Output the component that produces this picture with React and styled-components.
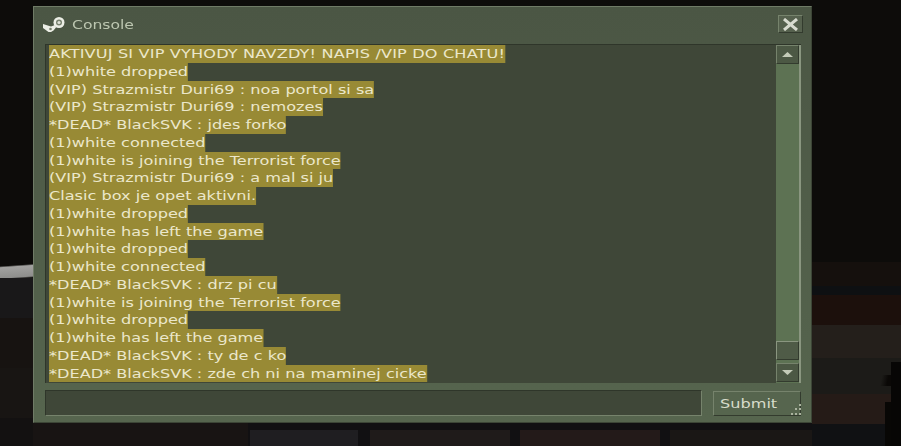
import React from "react";
import styled, { createGlobalStyle } from "styled-components";

const lines = [
  "AKTIVUJ SI VIP VYHODY NAVZDY! NAPIS /VIP DO CHATU!",
  "(1)white dropped",
  "(VIP) Strazmistr Duri69 : noa portol si sa",
  "(VIP) Strazmistr Duri69 : nemozes",
  "*DEAD* BlackSVK : jdes forko",
  "(1)white connected",
  "(1)white is joining the Terrorist force",
  "(VIP) Strazmistr Duri69 : a mal si ju",
  "Clasic box je opet aktivni.",
  "(1)white dropped",
  "(1)white has left the game",
  "(1)white dropped",
  "(1)white connected",
  "*DEAD* BlackSVK : drz pi cu",
  "(1)white is joining the Terrorist force",
  "(1)white dropped",
  "(1)white has left the game",
  "*DEAD* BlackSVK : ty de c ko",
  "*DEAD* BlackSVK : zde ch ni na maminej cicke",
];

// the game scene behind the window: soft patches of brick and shadow
const patch = (x, y, w, h, c) =>
  `linear-gradient(${c}, ${c}) ${x}px ${y}px / ${w}px ${h}px no-repeat`;

const scene = [
  patch(891, 362, 10, 84, "#070605"),
  "linear-gradient(100deg, transparent 30%, #0a0806 70%) 877px 375px / 15px 11px no-repeat",
  patch(885, 402, 16, 44, "#080705"),
  "linear-gradient(176deg, transparent 30%, #a2a2a0 38%, #8e8e8c 90%, transparent 98%) 0 260px / 33px 18px no-repeat",
  patch(0, 278, 33, 40, "#191819"),
  patch(0, 318, 33, 50, "#171311"),
  patch(0, 368, 33, 50, "#181513"),
  patch(0, 418, 33, 28, "#131111"),
  patch(812, 262, 89, 24, "#15100d"),
  patch(812, 286, 89, 9, "#0e1012"),
  patch(812, 295, 89, 30, "#1c100c"),
  patch(812, 325, 89, 33, "#241f1b"),
  patch(812, 358, 89, 36, "#1c1b18"),
  patch(812, 394, 89, 30, "#251b17"),
  patch(812, 424, 89, 22, "#101113"),
  patch(33, 423, 215, 23, "#181413"),
  patch(250, 430, 108, 16, "#1f1e21"),
  patch(370, 430, 140, 16, "#1f1b1a"),
  patch(520, 430, 140, 16, "#231a19"),
  patch(670, 430, 142, 16, "#1a1715"),
  patch(248, 423, 564, 23, "#111012"),
].join(", ");

const Global = createGlobalStyle`
  html, body { margin: 0; height: 100%; overflow: hidden; }
  body {
    font-family: "DejaVu Sans", sans-serif;
    background: ${scene}, #0d0c0a;
  }
`;

const Screen = styled.div`
  width: 901px;
  height: 446px;
  padding: 6px 0 0 33px;
  box-sizing: border-box;
`;

const Frame = styled.div`
  width: 779px;
  height: 417px;
  box-sizing: border-box;
  padding: 0 10px 6px 11px;
  display: flex;
  flex-direction: column;
  background: linear-gradient(#4b5644, #56654e);
  border-top: 1px solid #6f7b66;
  border-left: 1px solid #6f7b66;
  border-right: 1px solid #3c4536;
  border-bottom: 1px solid #3c4536;
  filter: blur(0.35px);
`;

const Header = styled.div`
  height: 37px;
  padding-bottom: 3px;
  box-sizing: border-box;
  display: flex;
  align-items: center;
  gap: 7px;
`;

const SteamIcon = styled.svg`
  margin-left: -2px;
`;

const Title = styled.span`
  flex: 1;
  color: #bcc6b0;
  font-size: 13px;
  transform: scaleX(1.2);
  transform-origin: left;
`;

const CloseButton = styled.div`
  width: 25px;
  height: 18px;
  margin-right: -2px;
  box-sizing: border-box;
  display: flex;
  align-items: center;
  justify-content: center;
  background: #56614e;
  border: 1px solid;
  border-color: #76836c #333b2e #333b2e #76836c;
`;

const Body = styled.div`
  height: 338px;
  flex-shrink: 0;
  display: flex;
  background: #3f4738;
  border-top: 1px solid #2f362a;
  border-left: 1px solid #2f362a;
`;

const Log = styled.div`
  flex: 1;
  min-width: 0;
  padding-left: 3px;
  overflow: hidden;
`;

const Line = styled.div`
  width: fit-content;
  height: 17.75px;
  line-height: 17.75px;
  font-size: 13px;
  letter-spacing: ${(p) => (p.$caps ? "0.13px" : "0")};
  color: #ebe7cb;
  background: #988a35;
  white-space: nowrap;
  transform: scaleX(1.24);
  transform-origin: left;
`;

const ScrollBar = styled.div`
  width: 25px;
  padding-bottom: 1px;
  display: flex;
  flex-direction: column;
  background: #5d7253;
  border-right: 2px solid #8a9680;
  box-sizing: border-box;
`;

const ArrowButton = styled.div`
  width: 23px;
  height: 19px;
  flex-shrink: 0;
  box-sizing: border-box;
  display: flex;
  align-items: center;
  justify-content: center;
  background: #4c5844;
  border: 1px solid;
  border-color: #76836c #333b2e #333b2e #76836c;
`;

const Track = styled.div`
  flex: 1;
  display: flex;
  align-items: flex-end;
`;

const Thumb = styled.div`
  width: 23px;
  height: 19px;
  margin-bottom: 3px;
  box-sizing: border-box;
  background: #4f5b47;
  border: 1px solid;
  border-color: #8a9680 #333b2e #333b2e #8a9680;
`;

const Footer = styled.div`
  flex: 1;
  display: flex;
  align-items: flex-end;
  gap: 11px;
`;

const Input = styled.div`
  width: 657px;
  height: 26px;
  box-sizing: border-box;
  background: #3f4738;
  border: 1px solid;
  border-color: #2f362a #76836c #76836c #2f362a;
`;

const Submit = styled.div`
  position: relative;
  width: 88px;
  height: 25px;
  box-sizing: border-box;
  padding-left: 6px;
  display: flex;
  align-items: center;
  background: #56654e;
  border: 1px solid;
  border-color: #76836c #333b2e #333b2e #76836c;
`;

const SubmitLabel = styled.span`
  color: #d8dccb;
  font-size: 13px;
  transform: scaleX(1.24);
  transform-origin: left;
`;

const Grip = styled.svg`
  position: absolute;
  right: -2px;
  bottom: -2px;
`;

const Arrow = ({ down }) => (
  <svg width="11" height="5" viewBox="0 0 11 5">
    <path d={down ? "M0 0H11L5.5 5Z" : "M5.5 0L11 5H0Z"} fill="#c4cbb8" />
  </svg>
);

export default function App() {
  return (
    <Screen>
      <Global />
      <Frame>
        <Header>
          <SteamIcon width="22" height="15" viewBox="0 0 22 15">
            <circle cx="16" cy="5.5" r="5.5" fill="#eceee6" />
            <circle cx="16" cy="5.5" r="3" fill="#77816e" />
            <circle cx="16" cy="5.5" r="1.6" fill="#dfe2d8" />
            <path d="M0 7L8 9.5L12 8L13 10.5L10.5 13.5L8 15H5.5L0 11Z" fill="#eceee6" />
            <circle cx="7.5" cy="12" r="1.3" fill="#77816e" />
          </SteamIcon>
          <Title>Console</Title>
          <CloseButton>
            <svg width="17" height="13" viewBox="0 0 17 13">
              <path d="M2 1L15 12M15 1L2 12" stroke="#d8dbd0" strokeWidth="3" />
            </svg>
          </CloseButton>
        </Header>
        <Body>
          <Log>
            {lines.map((line, i) => (
              <Line key={i} $caps={i === 0}>{line}</Line>
            ))}
          </Log>
          <ScrollBar>
            <ArrowButton><Arrow /></ArrowButton>
            <Track><Thumb /></Track>
            <ArrowButton><Arrow down /></ArrowButton>
          </ScrollBar>
        </Body>
        <Footer>
          <Input />
          <Submit>
            <SubmitLabel>Submit</SubmitLabel>
            <Grip width="14" height="13" viewBox="0 0 14 13" fill="#aab39f">
              <rect x="11" y="0" width="2" height="2" />
              <rect x="7" y="4" width="2" height="2" />
              <rect x="11" y="4" width="2" height="2" />
              <rect x="3" y="9" width="2" height="2" />
              <rect x="7" y="9" width="2" height="2" />
              <rect x="11" y="9" width="2" height="2" />
            </Grip>
          </Submit>
        </Footer>
      </Frame>
    </Screen>
  );
}
